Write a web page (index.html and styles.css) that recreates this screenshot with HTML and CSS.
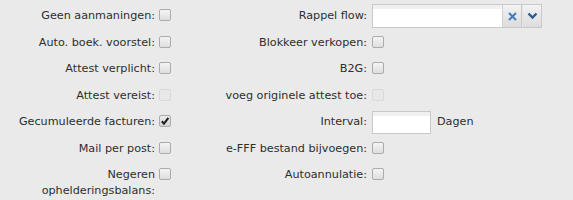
FILE: index.html
```html
<!DOCTYPE html>
<html>
<head>
    <title>Instellingen</title>
    <link rel="stylesheet" href="styles.css">
</head>
<body>
    <div class="form-grid">
        <!-- rij 1 -->
        <label class="lbl">Geen aanmaningen:</label>
        <div class="ctl"><span class="cb"></span></div>
        <label class="lbl">Rappel flow:</label>
        <div class="ctl">
            <div class="combo">
                <span class="combo-input"></span>
                <span class="combo-btn clear">
                    <svg width="11" height="11" viewBox="0 0 11 11"><path d="M2 2 L9 9 M9 2 L2 9" stroke="#3d7fc1" stroke-width="2"/></svg>
                </span>
                <span class="combo-btn">
                    <svg width="11" height="8" viewBox="0 0 11 8"><path d="M1.5 1.5 L5.5 5.5 L9.5 1.5" stroke="#2a5b92" stroke-width="2.4" fill="none"/></svg>
                </span>
            </div>
        </div>

        <!-- rij 2 -->
        <label class="lbl">Auto. boek. voorstel:</label>
        <div class="ctl"><span class="cb"></span></div>
        <label class="lbl">Blokkeer verkopen:</label>
        <div class="ctl"><span class="cb"></span></div>

        <!-- rij 3 -->
        <label class="lbl">Attest verplicht:</label>
        <div class="ctl"><span class="cb"></span></div>
        <label class="lbl">B2G:</label>
        <div class="ctl"><span class="cb"></span></div>

        <!-- rij 4 -->
        <label class="lbl">Attest vereist:</label>
        <div class="ctl"><span class="cb disabled"></span></div>
        <label class="lbl">voeg originele attest toe:</label>
        <div class="ctl"><span class="cb disabled"></span></div>

        <!-- rij 5 -->
        <label class="lbl">Gecumuleerde facturen:</label>
        <div class="ctl">
            <span class="cb checked">
                <svg width="10" height="10" viewBox="0 0 10 10"><path d="M1.8 5.2 L4 7.6 L8.4 1.8" stroke="#1e1e1e" stroke-width="2" fill="none"/></svg>
            </span>
        </div>
        <label class="lbl">Interval:</label>
        <div class="ctl">
            <span class="text-input"></span>
            <span class="unit">Dagen</span>
        </div>

        <!-- rij 6 -->
        <label class="lbl">Mail per post:</label>
        <div class="ctl"><span class="cb"></span></div>
        <label class="lbl">e-FFF bestand bijvoegen:</label>
        <div class="ctl"><span class="cb"></span></div>

        <!-- rij 7 -->
        <label class="lbl">Negeren ophelderingsbalans:</label>
        <div class="ctl"><span class="cb"></span></div>
        <label class="lbl">Autoannulatie:</label>
        <div class="ctl"><span class="cb"></span></div>
    </div>
</body>
</html>
```

FILE: styles.css
```css
body {
    margin: 0;
    background: #eaeaea;
    font-family: "DejaVu Sans", Verdana, sans-serif;
    font-size: 11.2px;
    color: #2e2e2e;
}

.form-grid {
    display: grid;
    grid-template-columns: 155px 34px 178px 1fr;
    grid-auto-rows: minmax(24px, auto);
    row-gap: 2.5px;
    padding-top: 4px;
}

.lbl {
    text-align: right;
    line-height: 16px;
    padding-top: 4px;
}

.ctl {
    display: flex;
    align-items: flex-start;
    padding-left: 4px;
}

.form-grid .ctl:nth-child(4n) {
    padding-left: 5px;
}

.cb {
    width: 10px;
    height: 10px;
    margin-top: 5px;
    border: 1px solid #ababab;
    border-radius: 2px;
    background: linear-gradient(#f4f4f4, #dedede);
    display: flex;
    align-items: center;
    justify-content: center;
}

.cb.disabled {
    border-color: #d9d9d9;
    background: #e8e8e8;
}

.cb.checked {
    background: linear-gradient(#ececec, #d4d4d4);
}

.combo {
    display: flex;
    width: 168px;
    height: 22px;
    border: 1px solid #c9c9c9;
    background: #fff;
}

.combo-input {
    flex: 1;
    background: linear-gradient(#f0f0f0 0, #f0f0f0 4px, #fff 4px);
    border-right: 1px solid #d0d0d0;
}

.combo-btn {
    width: 18px;
    display: flex;
    align-items: center;
    justify-content: center;
    background: linear-gradient(#f3f3f3, #dcdcdc);
    border-left: 1px solid #e4e4e4;
}

.combo-btn.clear {
    border-left: none;
    border-right: 1px solid #c9c9c9;
}

.text-input {
    width: 57px;
    height: 21px;
    margin-top: 1px;
    border: 1px solid #c9c9c9;
    background: linear-gradient(#f0f0f0 0, #f0f0f0 4px, #fff 4px);
}

.unit {
    margin-left: 6px;
    line-height: 16px;
    padding-top: 4px;
}
```
